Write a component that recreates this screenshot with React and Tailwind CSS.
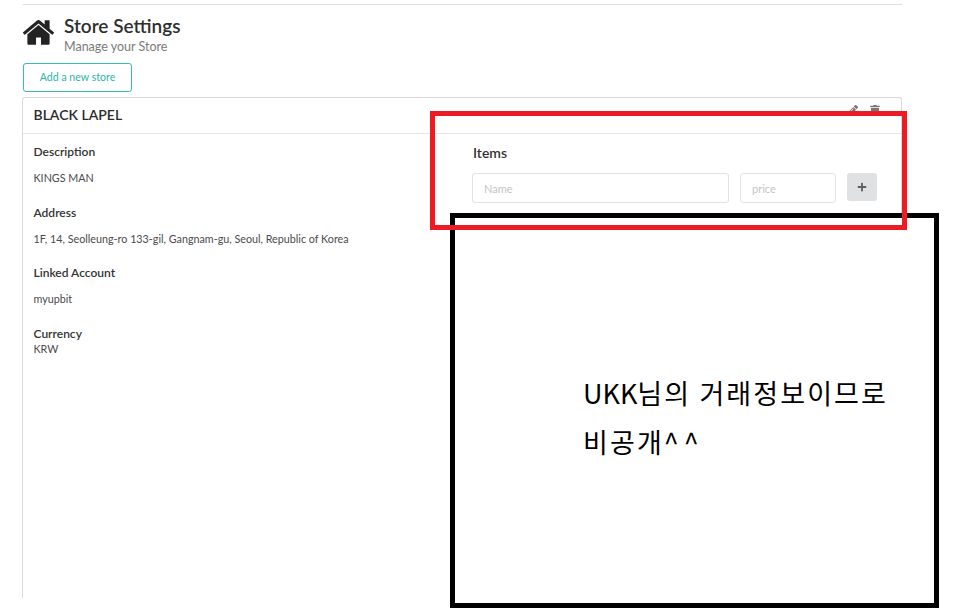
import { FaPencilAlt, FaTrash, FaPlus } from "react-icons/fa";

const fields = [
  { label: "Description", value: "KINGS MAN" },
  { label: "Address", value: "1F, 14, Seolleung-ro 133-gil, Gangnam-gu, Seoul, Republic of Korea" },
  { label: "Linked Account", value: "myupbit" },
];

function HomeIcon() {
  return (
    <svg viewBox="93 256 1606 1280" className="mt-[5px] h-[25px] w-[31px] shrink-0 fill-[#232323]">
      <path d="M1472 992v480q0 26-19 45t-45 19h-384v-384h-256v384h-384q-26 0-45-19t-19-45v-480q0-1 .5-3t.5-3l575-474 575 474q1 2 1 6zm223-69l-62 74q-8 9-21 11h-3q-13 0-21-7l-692-577-692 577q-12 8-24 7-13-2-21-11l-62-74q-8-10-7-23.5t11-20.5l719-599q32-26 76-26t76 26l244 204v-195q0-14 9-23t23-9h192q14 0 23 9t9 23v408l219 182q10 8 11 21.5t-7 23.5z" />
    </svg>
  );
}

export default function App() {
  return (
    <div className="relative h-[615px] w-[960px] overflow-hidden bg-white font-['Lato','Open_Sans',sans-serif] text-[#2b2b2b]">
      <div className="ml-[23px] flex w-[879px] flex-col pt-1">
        <div className="h-px w-full bg-[#dedede]" />

        <div className="mt-[10px] flex items-start gap-[10px]">
          <HomeIcon />
          <div>
            <h1 className="text-[19px] leading-[22px] font-semibold text-[#2f2f2f]">Store Settings</h1>
            <p className="mt-[2px] text-[12.5px] leading-[16px] text-[#7a7a7a]">Manage your Store</p>
          </div>
        </div>

        <button className="mt-[8px] h-[29px] w-[109px] rounded-[3px] border border-[#35bdb2] bg-white text-[10.6px] text-[#2cb5ab]">
          Add a new store
        </button>

        <div className="mt-[5px] -ml-px flex h-[501px] w-[880px] flex-col rounded-t-[3px] border-x border-t border-[#d9d9d9]">
          <div className="flex h-[36px] justify-between border-b border-[#e6e6e6] pr-[21px] pl-[10.5px]">
            <span className="text-[14px] leading-[34px] font-semibold text-[#2b2b2b]">BLACK LAPEL</span>
            <div className="flex items-start gap-[12px] pt-[7px] text-[#777777]">
              <FaPencilAlt className="h-[11px] w-[11px]" />
              <FaTrash className="h-[11px] w-[10px]" />
            </div>
          </div>

          <div className="flex flex-1">
            <div className="w-[438px] pt-[10px] pl-[10.5px]">
              {fields.map((f) => (
                <div key={f.label} className="mb-[18.7px]">
                  <h3 className="text-[12px] leading-[16px] font-semibold text-[#333333]">{f.label}</h3>
                  <p className="mt-[10px] text-[10.75px] leading-[16px] text-[#4a4a4a]">{f.value}</p>
                </div>
              ))}
              <h3 className="text-[12px] leading-[16px] font-semibold text-[#333333]">Currency</h3>
              <p className="text-[10.75px] leading-[14px] text-[#4a4a4a]">KRW</p>
            </div>

            <div className="flex-1 pt-[10px] pl-[11px]">
              <h3 className="ml-px text-[14px] leading-[18px] font-semibold text-[#333333]">Items</h3>
              <div className="mt-[11px] flex items-center gap-[11px]">
                <input
                  placeholder="Name"
                  className="h-[30px] w-[257px] rounded-[3px] border border-[#e2e2e2] px-[11px] text-[11px] placeholder:text-[#c4c4c4]"
                />
                <input
                  placeholder="price"
                  className="h-[30px] w-[96px] rounded-[3px] border border-[#e2e2e2] px-[11px] text-[11px] placeholder:text-[#c4c4c4]"
                />
                <button className="-mt-[2px] flex h-[28px] w-[30px] items-center justify-center rounded-[3px] bg-[#e0e1e2] text-[#5f6062]">
                  <FaPlus className="h-[10px] w-[10px]" />
                </button>
              </div>
            </div>
          </div>
        </div>
      </div>

      {/* hand-drawn annotations over the page */}
      <div className="absolute top-[213px] left-[450px] h-[395px] w-[489px] border-[5px] border-black bg-white">
        <div className="pt-[150px] pl-[128px] font-['Noto_Sans_CJK_KR',sans-serif] text-[27px] leading-[49px] tracking-[2.1px] text-black">
          <p><span className="tracking-normal">UKK</span>님의 거래정보이므로</p>
          <p>비공개<span className="tracking-[5px]">^^</span></p>
        </div>
      </div>
      <div className="absolute top-[111px] left-[430px] h-[119px] w-[477px] border-[5px] border-[#ed1c24]" />
    </div>
  );
}
